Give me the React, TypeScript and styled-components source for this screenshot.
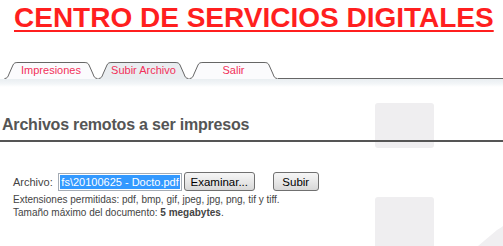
import styled, { createGlobalStyle } from "styled-components";

const GlobalStyle = createGlobalStyle`
    body {
        margin: 0;
        background: #ffffff;
        font-family: "Liberation Sans", Arial, sans-serif;
    }
`;

const Page = styled.div`
    position: relative;
    width: 503px;
    height: 246px;
    overflow: hidden;
    background: #ffffff;
`;

const Watermark = styled.svg`
    position: absolute;
    left: 0;
    top: 0;
    z-index: 0;
`;

const Content = styled.div`
    position: relative;
    z-index: 1;
`;

const Title = styled.h1`
    margin: 4px 0 0 14px;
    width: 480px;
    font-size: 28px;
    line-height: 28px;
    font-weight: 700;
    color: #ff1f1f;
    text-decoration: underline;
    text-decoration-thickness: 2px;
    text-underline-offset: 3px;
    white-space: nowrap;
`;

const TabBar = styled.div`
    display: flex;
    align-items: flex-end;
    margin-top: 30px;
    padding-left: 4px;
    height: 17px;
`;

const TabBox = styled.a<{ $w: number }>`
    position: relative;
    width: ${(p) => p.$w}px;
    height: 17px;
    flex-shrink: 0;
    font-size: 11px;
    line-height: 11px;
    color: #f2315a;
    text-decoration: none;
    text-align: center;
`;

const TabShape = styled.svg`
    position: absolute;
    left: 0;
    top: 0;
`;

const TabLabel = styled.span`
    position: relative;
    display: block;
    padding-top: 3px;
`;

const TabRest = styled.div`
    flex: 1;
    height: 17px;
    border-bottom: 1px solid #666666;
    box-sizing: border-box;
`;

const Band = styled.div`
    height: 8px;
    background: linear-gradient(#e9eef1, #f3f6f8 60%, #ffffff);
`;

const Heading = styled.h2`
    margin: 28px 0 0 2px;
    font-size: 16px;
    line-height: 20px;
    font-weight: 700;
    letter-spacing: -0.2px;
    color: #555555;
`;

const Rule = styled.div`
    margin-top: 5px;
    height: 2px;
    background: #555555;
`;

const FormRow = styled.div`
    display: flex;
    align-items: center;
    margin-top: 30px;
    padding-left: 13px;
    height: 19px;
    font-size: 11px;
    color: #444444;
`;

const Label = styled.span`
    margin-right: 5px;
`;

const FileInput = styled.div`
    display: flex;
    justify-content: flex-end;
    align-items: center;
    width: 124px;
    height: 18px;
    box-sizing: border-box;
    border: 1px solid #a5acb5;
    padding: 0 1px;
    overflow: hidden;
    background: #ffffff;
`;

const Selected = styled.span`
    flex-shrink: 0;
    background: #3399ff;
    color: #ffffff;
    font-size: 11px;
    line-height: 14px;
    padding: 0 1px;
    white-space: nowrap;
`;

const Button = styled.button<{ $w: number; $gap: number }>`
    width: ${(p) => p.$w}px;
    height: 19px;
    margin-left: ${(p) => p.$gap}px;
    padding: 0;
    border: 1px solid #707070;
    border-radius: 3px;
    background: linear-gradient(#f6f6f6, #e8e8e8 50%, #d8d8d8);
    font-family: "Liberation Sans", Arial, sans-serif;
    font-size: 11.5px;
    color: #000000;
`;

const Notes = styled.div`
    margin-top: 2px;
    padding-left: 13px;
    font-size: 10px;
    line-height: 13px;
    color: #444444;
`;

function Tab({ label, width, fill }: { label: string; width: number; fill: string }) {
    const w = width;
    const d = `M0.5,16.5 C3,16.5 4,15 5,12 L9,3 C10,1 11,0.5 14,0.5 L${w - 14},0.5 C${w - 11},0.5 ${w - 10},1 ${w - 9},3 L${w - 5},12 C${w - 4},15 ${w - 3},16.5 ${w - 0.5},16.5`;
    return (
        <TabBox $w={w} href="#">
            <TabShape width={w} height={17} viewBox={`0 0 ${w} 17`}>
                <path d={`${d} L${w},17 L0,17 Z`} fill={fill} stroke="none" />
                <path d={d} fill="none" stroke="#666666" strokeWidth={1} />
            </TabShape>
            <TabLabel>{label}</TabLabel>
        </TabBox>
    );
}

export default function App() {
    return (
        <Page>
            <GlobalStyle />
            <Watermark width={503} height={246} viewBox="0 0 503 246">
                <rect x={375} y={103} width={59} height={45} rx={3} fill="#efeef0" />
                <rect x={375} y={197} width={59} height={60} rx={3} fill="#efeef0" />
                <path d="M478,246 L497,230 C500,228 502,227 503,226 L503,246 Z" fill="#f0eff1" />
            </Watermark>
            <Content>
                <Title>CENTRO DE SERVICIOS DIGITALES</Title>
                <TabBar>
                    <Tab label="Impresiones" width={94} fill="#fbfbfd" />
                    <Tab label="Subir Archivo" width={91} fill="#e9edf0" />
                    <Tab label="Salir" width={89} fill="#fbfbfd" />
                    <TabRest />
                </TabBar>
                <Band />
                <Heading>Archivos remotos a ser impresos</Heading>
                <Rule />
                <FormRow>
                    <Label>Archivo:</Label>
                    <FileInput>
                        <Selected>fs\20100625 - Docto.pdf</Selected>
                    </FileInput>
                    <Button $w={71} $gap={2}>Examinar...</Button>
                    <Button $w={46} $gap={18}>Subir</Button>
                </FormRow>
                <Notes>
                    <div>Extensiones permitidas: pdf, bmp, gif, jpeg, jpg, png, tif y tiff.</div>
                    <div>
                        Tamaño máximo del documento: <b>5 megabytes</b>.
                    </div>
                </Notes>
            </Content>
        </Page>
    );
}
